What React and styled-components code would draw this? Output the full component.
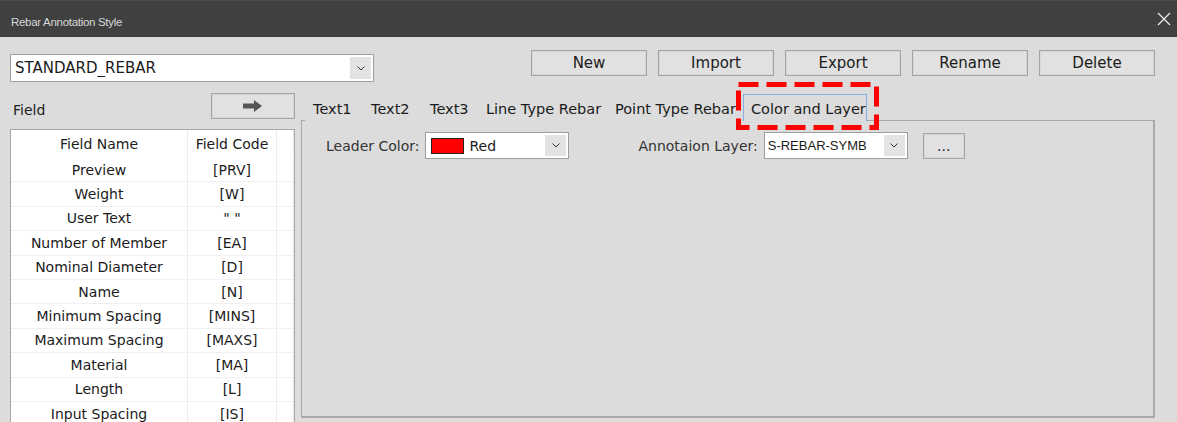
import React from 'react';
import styled, {createGlobalStyle} from 'styled-components';

const GlobalStyle = createGlobalStyle`
  html, body {
    margin: 0;
    padding: 0;
    background: #dcdcdc;
  }
`;

const UI_FONT = `"DejaVu Sans", "Noto Sans", sans-serif`;

const Window = styled.div`
  width: 1177px;
  height: 422px;
  overflow: hidden;
  background: #dcdcdc;
  font-family: ${UI_FONT};
  color: #1b1b1b;
  position: relative;
`;

const TitleBar = styled.div`
  height: 37px;
  background: #404040;
  border-top: 1px solid #4a4a4a;
  box-sizing: border-box;
  display: flex;
  align-items: center;
  padding: 0 6px 0 11px;
`;

const Title = styled.div`
  font-family: "Liberation Sans", Arial, sans-serif;
  font-size: 11.5px;
  letter-spacing: -0.3px;
  color: #d8d8d8;
  margin-top: 6px;
  flex: 1;
`;

const CloseIcon = styled.svg`
  width: 14px;
  height: 14px;
  margin-top: -1px;
`;

const Body = styled.div`
  padding: 13px 22px 0 10px;
  display: flex;
  flex-direction: column;
`;

const TopRow = styled.div`
  display: flex;
  align-items: flex-start;
`;

const Combo = styled.div`
  width: ${p => p.$w}px;
  height: ${p => p.$h}px;
  box-sizing: border-box;
  border: 1px solid #9e9e9e;
  background: #fff;
  display: flex;
  align-items: center;
  margin-top: ${p => p.$top || 0}px;
`;

const ComboText = styled.div`
  flex: 1;
  padding-left: ${p => p.$pad || 4}px;
  font-size: ${p => p.$size || 14}px;
  font-family: ${p => p.$font || UI_FONT};
  white-space: nowrap;
  overflow: hidden;
  display: flex;
  align-items: center;
  gap: 5px;
`;

const ComboArrow = styled.div`
  width: 21px;
  align-self: stretch;
  margin: 2px 2px 2px 0;
  background: #e3e3e3;
  display: flex;
  align-items: center;
  justify-content: center;
`;

const Swatch = styled.span`
  width: 33px;
  height: 16px;
  box-sizing: border-box;
  background: #ff0000;
  border: 1px solid #222;
`;

const ButtonBar = styled.div`
  margin-left: auto;
  display: flex;
  gap: 11px;
`;

const Button = styled.button`
  width: ${p => p.$w || 116}px;
  height: ${p => p.$h || 26}px;
  box-sizing: border-box;
  background: #e1e1e1;
  border: 1px solid #a3a3a3;
  box-shadow: inset 0 0 0 1px #d7d7d7;
  font-family: ${UI_FONT};
  font-size: ${p => p.$size || 15}px;
  color: #1b1b1b;
  padding: 0;
  margin-left: ${p => p.$gap || 0}px;
  display: flex;
  align-items: center;
  justify-content: center;
`;

const Main = styled.div`
  display: grid;
  grid-template-columns: 285px 854px;
  column-gap: 6px;
  margin-top: 11px;
`;

const LeftCol = styled.div`
  display: flex;
  flex-direction: column;
`;

const FieldHead = styled.div`
  display: flex;
  align-items: center;
  justify-content: space-between;
  height: 25px;
`;

const FieldLabel = styled.div`
  font-size: 14px;
  padding-left: 3px;
  margin-top: 8px;
  color: #222;
`;

const Table = styled.div`
  margin-top: 11px;
  background: #fff;
  border-left: 1px solid #a7a7a7;
  border-top: 1px solid #a7a7a7;
  border-right: 1px solid #a7a7a7;
  display: grid;
  grid-template-columns: 177px 89px 1fr;
`;

const Cell = styled.div`
  height: ${p => (p.$head ? 28 : 24.4)}px;
  box-sizing: border-box;
  display: flex;
  align-items: center;
  justify-content: center;
  font-size: 14px;
  white-space: nowrap;
  color: #1b1b1b;
  border-right: 1px solid #ececec;
  border-bottom: 1px solid ${p => (p.$head ? '#fff' : '#f0f0f0')};
`;

const RightCol = styled.div`
  display: flex;
  flex-direction: column;
  position: relative;
`;

const TabStrip = styled.div`
  display: flex;
  align-items: flex-end;
  height: 27px;
  padding-left: 4px;
`;

const Tab = styled.div`
  width: ${p => p.$w}px;
  height: ${p => (p.$active ? 27 : 25)}px;
  box-sizing: border-box;
  padding: ${p => (p.$active ? 1 : 0)}px 0 0 7px;
  font-size: 14.5px;
  color: #1b1b1b;
  display: flex;
  align-items: center;
  white-space: nowrap;
  background: #dcdcdc;
  border: 1px solid ${p => (p.$active ? '#86aee6' : 'transparent')};
  border-bottom: none;
  position: relative;
  top: 1px;
`;

const Panel = styled.div`
  height: 298px;
  box-sizing: border-box;
  border: 1px solid #a8a8a8;
  border-right-width: 2px;
  border-bottom-width: 2px;
  padding: 11px 0 0 24px;
`;

const FormRow = styled.div`
  display: flex;
  align-items: center;
`;

const FieldText = styled.div`
  font-size: 14px;
  color: #333;
  margin-right: 6px;
  margin-left: ${p => p.$gap || 0}px;
`;

const Highlight = styled.svg`
  position: absolute;
  left: 435px;
  top: -11px;
  width: 143px;
  height: 48px;
  overflow: visible;
`;

const Chevron = () => (
  <svg width="8" height="5" viewBox="0 0 8 5">
    <path d="M0.5 0.5 L4 4 L7.5 0.5" fill="none" stroke="#333" strokeWidth="1" />
  </svg>
);

const fields = [
  ['Preview', '[PRV]'],
  ['Weight', '[W]'],
  ['User Text', '" "'],
  ['Number of Member', '[EA]'],
  ['Nominal Diameter', '[D]'],
  ['Name', '[N]'],
  ['Minimum Spacing', '[MINS]'],
  ['Maximum Spacing', '[MAXS]'],
  ['Material', '[MA]'],
  ['Length', '[L]'],
  ['Input Spacing', '[IS]'],
];

const tabs = [
  ['Text1', 58],
  ['Text2', 59],
  ['Text3', 56],
  ['Line Type Rebar', 129],
  ['Point Type Rebar', 136],
];

const App = () => {
  return (
    <Window>
      <GlobalStyle/>
      <TitleBar>
        <Title>Rebar Annotation Style</Title>
        <CloseIcon viewBox="0 0 14 14">
          <path d="M1 1 L13 13 M13 1 L1 13" stroke="#e6e6e6" strokeWidth="1.4"/>
        </CloseIcon>
      </TitleBar>
      <Body>
        <TopRow>
          <Combo $w={364} $h={28} $top={4}>
            <ComboText $size={15}>STANDARD_REBAR</ComboText>
            <ComboArrow><Chevron/></ComboArrow>
          </Combo>
          <ButtonBar>
            {['New', 'Import', 'Export', 'Rename', 'Delete'].map(b => (
              <Button key={b}>{b}</Button>
            ))}
          </ButtonBar>
        </TopRow>
        <Main>
          <LeftCol>
            <FieldHead>
              <FieldLabel>Field</FieldLabel>
              <Button $w={84} $h={26}>
                <svg width="20" height="12" viewBox="0 0 20 12">
                  <path d="M0 3.5 H11 V0 L19 6 L11 12 V8.5 H0 Z" fill="#555"/>
                </svg>
              </Button>
            </FieldHead>
            <Table>
              <Cell $head>Field Name</Cell>
              <Cell $head>Field Code</Cell>
              <Cell $head/>
              {fields.map(([name, code]) => (
                <React.Fragment key={name}>
                  <Cell>{name}</Cell>
                  <Cell>{code}</Cell>
                  <Cell/>
                </React.Fragment>
              ))}
            </Table>
          </LeftCol>
          <RightCol>
            <TabStrip>
              {tabs.map(([t, w]) => <Tab key={t} $w={w}>{t}</Tab>)}
              <Tab $active $w={124}>Color and Layer</Tab>
            </TabStrip>
            <Panel>
              <FormRow>
                <FieldText>Leader Color:</FieldText>
                <Combo $w={144} $h={27}>
                  <ComboText $pad={5}><Swatch/>Red</ComboText>
                  <ComboArrow><Chevron/></ComboArrow>
                </Combo>
                <FieldText $gap={69}>Annotaion Layer:</FieldText>
                <Combo $w={144} $h={27}>
                  <ComboText $pad={3} $size={13} $font={`"Liberation Sans", Arial, sans-serif`}>S-REBAR-SYMB</ComboText>
                  <ComboArrow><Chevron/></ComboArrow>
                </Combo>
                <Button $w={42} $h={26} $size={14} $gap={15}>...</Button>
              </FormRow>
            </Panel>
            <Highlight viewBox="0 0 143 48">
              <rect x="2.5" y="2.5" width="138" height="43" fill="none" stroke="#ff0000"
                    strokeWidth="5" strokeDasharray="20 8"/>
            </Highlight>
          </RightCol>
        </Main>
      </Body>
    </Window>
  );
};

export default App;
